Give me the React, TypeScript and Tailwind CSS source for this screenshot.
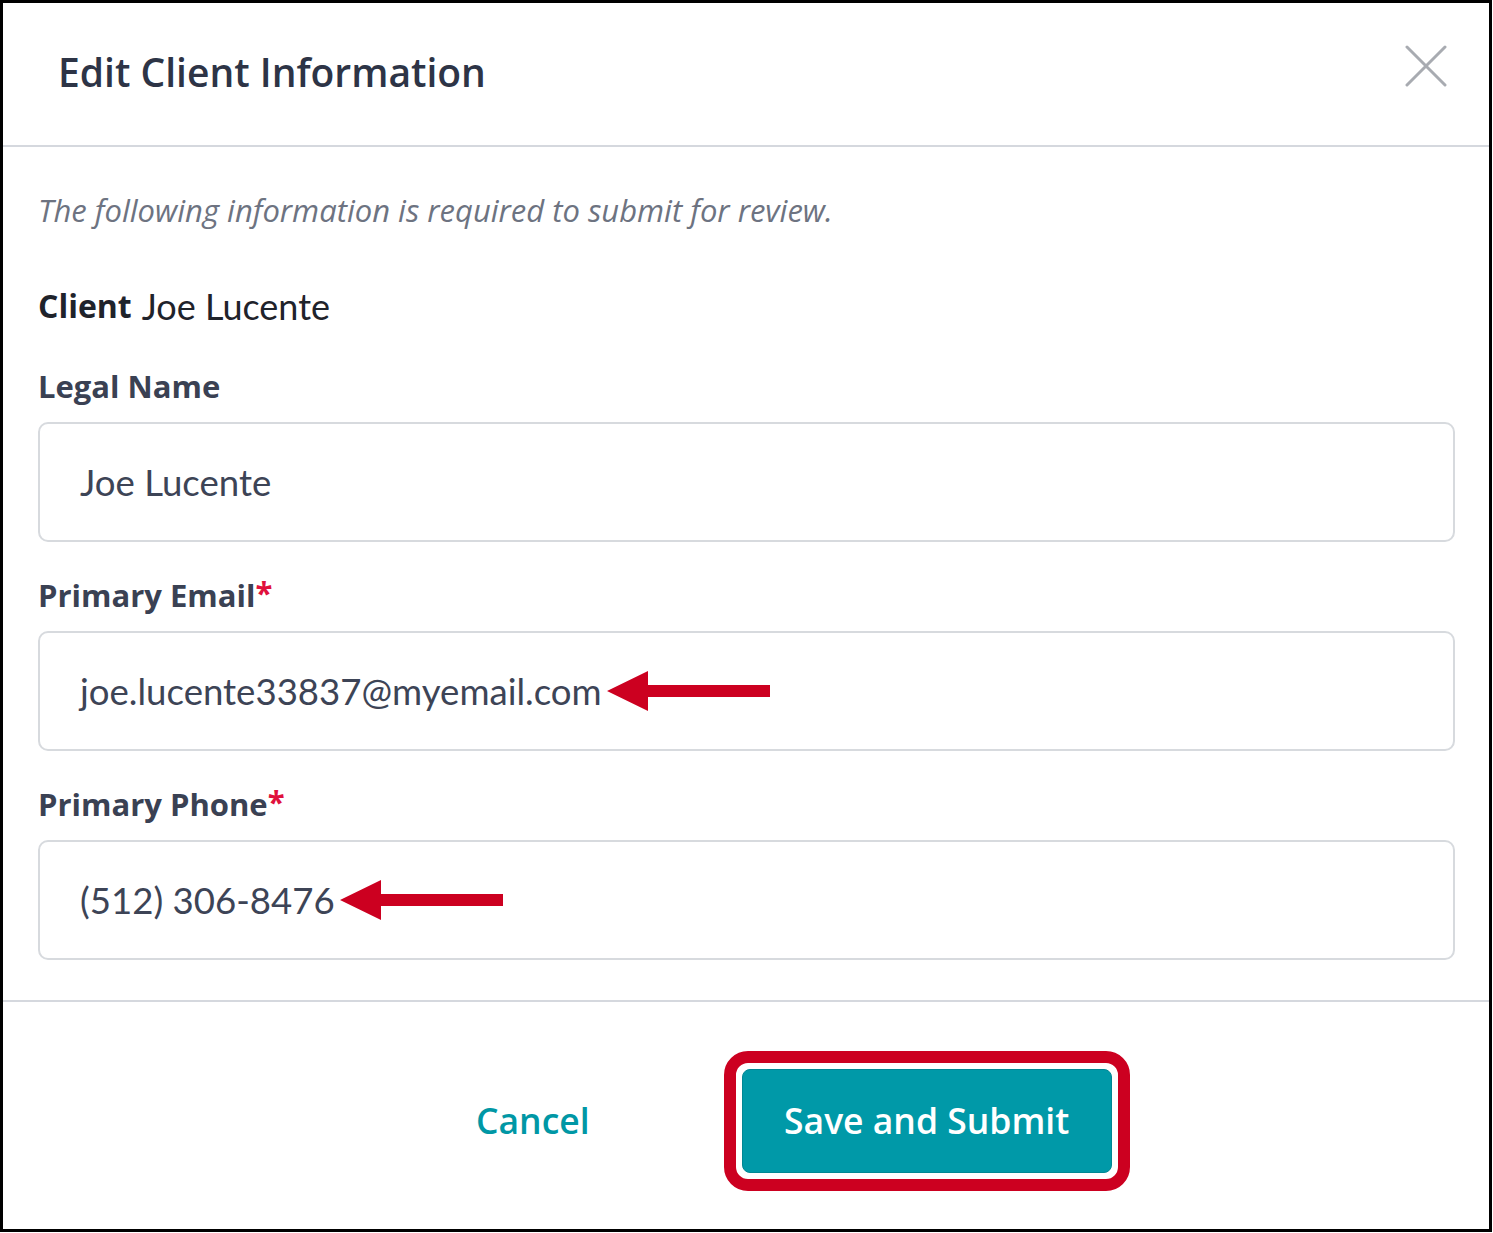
import React from "react";

const muli = { fontFamily: '"Open Sans", "Noto Sans", sans-serif' };
const lato = { fontFamily: 'Lato, "Liberation Sans", sans-serif' };

function Arrow() {
  return (
    <svg width="163" height="40" viewBox="0 0 163 40" className="shrink-0 ml-[5px]">
      <polygon points="0,20 41,0 41,14 163,14 163,26 41,26 41,40" fill="#cc0020" />
    </svg>
  );
}

function Field({ label, value, required, arrow }: { label: string; value: string; required?: boolean; arrow?: boolean }) {
  return (
    <div>
      <div className="h-[36px] flex items-center text-[31px] font-bold text-[#3a4153]" style={muli}>
        {label}
        {required && <span className="text-[#e0113d] self-start leading-[30px]">*</span>}
      </div>
      <div className="mt-[18px] h-[120px] border-2 border-[#d7dade] rounded-[10px] pl-[40px] flex items-center">
        <span className="text-[36.6px] text-[#3d4456]" style={lato}>{value}</span>
        {arrow && <Arrow />}
      </div>
    </div>
  );
}

export default function App() {
  return (
    <div className="w-[1492px] h-[1232px] border-[3px] border-black bg-white flex flex-col">
      {/* header */}
      <div className="h-[144px] border-b-2 border-[#d5d8de] flex items-center justify-between pl-[55px] pr-[42px]">
        <h1 className="text-[39px] font-semibold text-[#2d3446] mb-[3px]" style={muli}>Edit Client Information</h1>
        <svg width="42" height="42" viewBox="0 0 42 42" className="mb-[16px]">
          <path d="M2 2L40 40M40 2L2 40" stroke="#a8abb1" strokeWidth="3" strokeLinecap="round" />
        </svg>
      </div>

      {/* body */}
      <div className="pl-[35px] pr-[34px] pt-[45px] flex flex-col">
        <p className="h-[36px] flex items-center italic text-[31px] text-[#6d7381]" style={muli}>
          The following information is required to submit for review.
        </p>
        <div className="mt-[58px] h-[40px] flex items-center text-[#1f232b]">
          <span className="text-[32px] font-bold" style={muli}>Client</span>
          <span className="text-[36px] ml-[10px]" style={lato}>Joe Lucente</span>
        </div>
        <div className="mt-[42px] flex flex-col gap-[35px]">
          <Field label="Legal Name" value="Joe Lucente" />
          <Field label="Primary Email" value="joe.lucente33837@myemail.com" required arrow />
          <Field label="Primary Phone" value="(512) 306-8476" required arrow />
        </div>
      </div>

      {/* footer */}
      <div className="mt-[40px] border-t-2 border-[#d5d8de] flex-1 flex items-start pt-[49px] pl-[473px]">
        <div className="h-[140px] flex items-center">
          <button className="text-[35.5px] font-semibold text-[#0097a5]" style={muli}>Cancel</button>
        </div>
        <div className="ml-[134px] border-[12px] border-[#cc0020] rounded-[24px] p-[6px] bg-white">
          <button
            className="w-[370px] h-[104px] bg-[#0099a8] border border-[#008793] rounded-[8px] text-white text-[35.5px] font-semibold"
            style={muli}
          >
            Save and Submit
          </button>
        </div>
      </div>
    </div>
  );
}
